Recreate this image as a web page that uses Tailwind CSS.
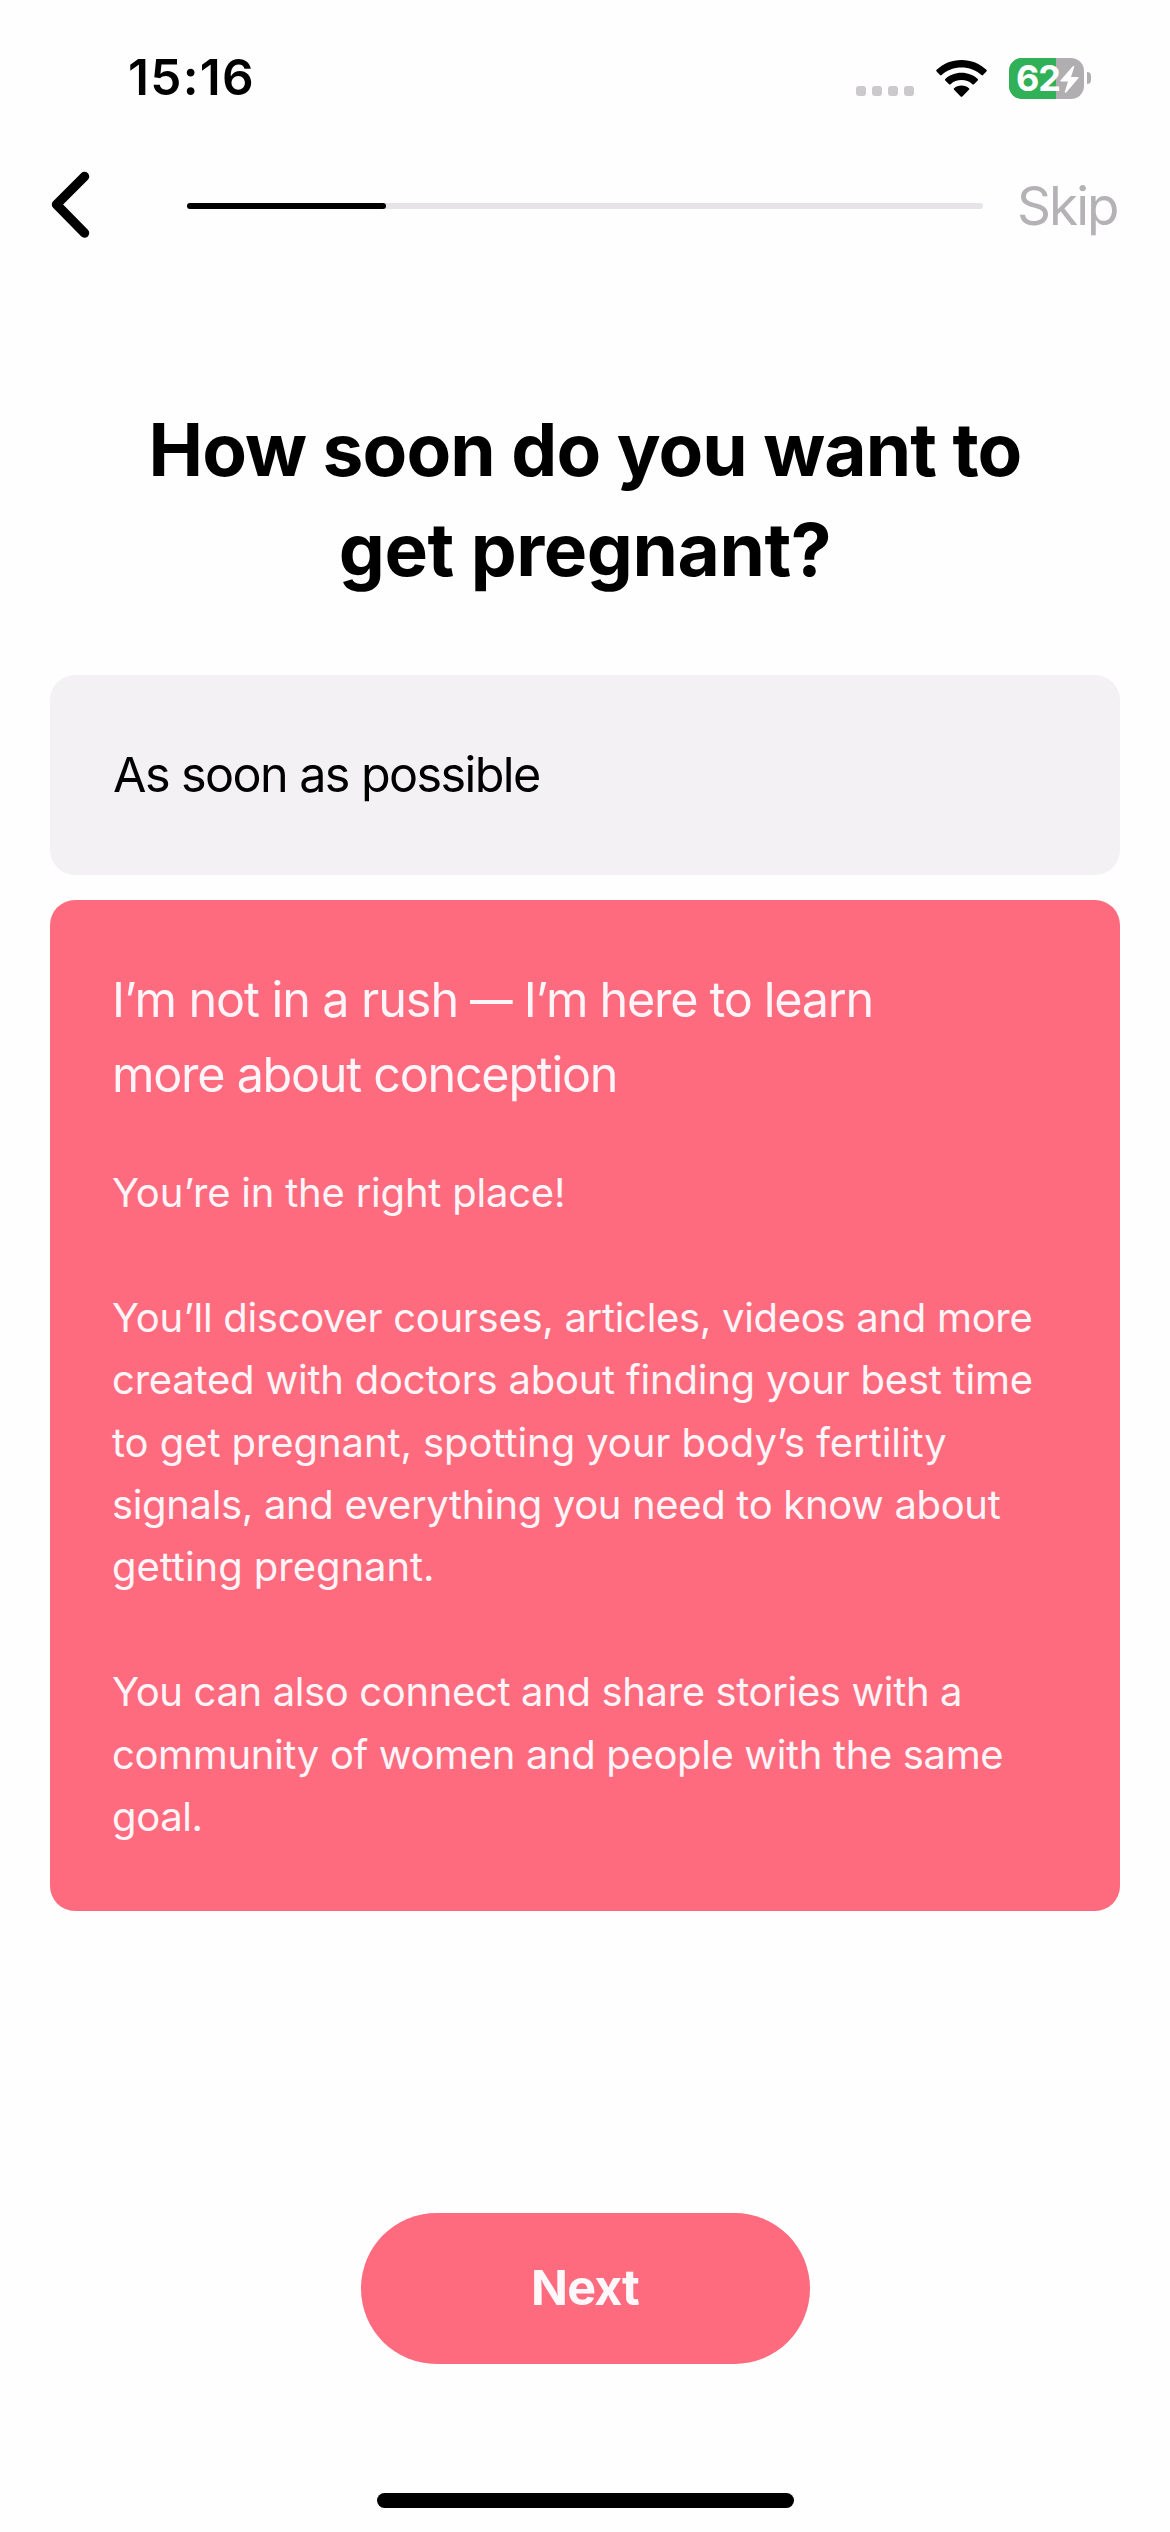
<!DOCTYPE html>
<html lang="en">
  <head>
    <meta charset="UTF-8" />
    <meta name="viewport" content="width=device-width, initial-scale=1.0" />
    <script src="https://cdn.jsdelivr.net/npm/@tailwindcss/browser@4"></script>
    <title>Onboarding</title>
  </head>
  <body class="bg-[#fefefe]">
    <div class="w-[1170px] h-[2532px] flex flex-col overflow-hidden font-[Inter,sans-serif] text-black">

      <!-- status bar -->
      <div class="h-[156px] shrink-0 flex items-center justify-between pl-32 pr-[79px]">
        <span class="text-[49.5px] leading-none font-semibold tracking-[0.026em]">15:16</span>
        <div class="flex items-center">
          <div class="flex gap-1.5 mt-[26px] mr-[22px]">
            <span class="size-2.5 rounded-[3px] bg-[#cbc9cc]"></span>
            <span class="size-2.5 rounded-[3px] bg-[#cbc9cc]"></span>
            <span class="size-2.5 rounded-[3px] bg-[#cbc9cc]"></span>
            <span class="size-2.5 rounded-[3px] bg-[#cbc9cc]"></span>
          </div>
          <svg class="w-[51px] h-[37px] mr-[22px]" viewBox="0 0 51 37">
            <path d="M25.5 0C35.2 0 44 3.700 50.400 9.800C50.900 10.300 50.900 11 50.400 11.500L47 15C46.500 15.500 45.900 15.500 45.400 15C40 10.100 33.100 7.500 25.500 7.500S11 10.100 5.600 15C5.100 15.500 4.500 15.500 4 15L0.600 11.500C0.100 11 0.100 10.300 0.600 9.800C7 3.700 15.800 0 25.500 0Z" />
            <path d="M25.500 12.700C31.800 12.700 37.500 15 41.700 18.900C42.200 19.400 42.200 20.100 41.700 20.600L38 24.200C37.500 24.700 36.900 24.700 36.400 24.200C33.400 21.600 29.700 20.100 25.500 20.100S17.600 21.600 14.600 24.200C14.100 24.700 13.500 24.700 13 24.200L9.300 20.600C8.800 20.100 8.800 19.400 9.300 18.900C13.500 15 19.200 12.700 25.500 12.700Z" />
            <path d="M25.500 25.500C28.400 25.500 31 26.500 32.900 28.200C33.400 28.600 33.400 29.300 32.900 29.800L26.400 36.400C25.900 36.900 25.100 36.900 24.600 36.400L18.100 29.800C17.600 29.300 17.600 28.600 18.100 28.200C20 26.500 22.600 25.500 25.500 25.500Z" />
          </svg>
          <div class="flex items-center gap-[3px]">
            <div class="relative w-[75px] h-[41px] rounded-[13px] bg-[#b0aeb1]">
              <div class="absolute inset-y-0 left-0 w-[47px] rounded-l-[13px] bg-[#30b157]"></div>
              <div class="absolute inset-0 flex items-center pl-[7px]">
                <span class="text-[36px] leading-none font-bold tracking-[-0.03em] text-white">62</span>
                <svg class="absolute left-[51px] top-2 w-[19px] h-[27px]" viewBox="0 0 19 27">
                  <path d="M12.800 0.300L0.600 14.200C0.100 14.800 0.400 15.500 1.100 15.500H8L4.800 25.700C4.500 26.700 5.600 27.200 6.200 26.500L18.400 12.300C18.900 11.700 18.600 11 17.900 11H11L14.200 1.100C14.500 0.200 13.500 -0.400 12.800 0.300Z" fill="#fff" />
                </svg>
              </div>
            </div>
            <div class="w-1 h-3 rounded-r-full bg-[#b0aeb1]"></div>
          </div>
        </div>
      </div>

      <!-- back, progress, skip -->
      <div class="h-[100px] shrink-0 flex items-center pl-[50px]">
        <svg class="w-10 h-[68px] -mt-0.5" viewBox="0 0 40 68" fill="none" stroke="#000" stroke-width="9.500" stroke-linecap="round" stroke-linejoin="round">
          <path d="M34.500 5.500L6.500 33.500L34.500 62" />
        </svg>
        <div class="w-[796px] h-1.5 ml-[97px] rounded-full bg-[#e6e4e7]">
          <div class="w-1/4 h-full rounded-full bg-black"></div>
        </div>
        <button class="ml-[34px] text-[53px] leading-none tracking-[-0.037em] text-[#b4b2b5]">Skip</button>
      </div>

      <h1 class="mt-36 text-center text-[73px] leading-[100px] font-bold">
        <span class="block tracking-[-0.0123em]">How soon do you want to</span>
        <span class="block tracking-[-0.006em]">get pregnant?</span>
      </h1>

      <!-- answers -->
      <div class="mt-[75px] px-[50px] flex flex-col gap-[25px]">
        <div class="h-[200px] rounded-[25px] bg-[#f3f1f4] px-[63px] flex items-center">
          <p class="text-[48.5px] tracking-[-0.0325em]">As soon as possible</p>
        </div>
        <div class="h-[1011px] rounded-[25px] bg-[#ff6b7e] pt-[62px] px-[62px] text-[#fff5f8]">
          <p class="text-[48.5px] leading-[75px] tracking-[-0.026em]"><span class="tracking-[-0.022em]">I’m not in a rush</span> <span class="inline-block w-[41px] scale-x-[.88] origin-left">—</span> I’m here to learn<br />more about conception</p>
          <div class="mt-[50px] text-[40px] leading-[62.4px] tracking-[-0.0075em] whitespace-nowrap">
            <p class="tracking-[-0.0055em]">You’re in the right place!</p>
            <p class="mt-[62.4px]">
              You’ll discover courses, articles, videos and more<br />
              <span class="tracking-[-0.0055em]">created with doctors about finding your best time</span><br />
              <span class="tracking-[-0.002em]">to get pregnant, spotting your body’s fertility</span><br />
              <span class="tracking-[-0.0085em]">signals, and everything you need to know about</span><br />
              <span class="tracking-[-0.001em]">getting pregnant.</span>
            </p>
            <p class="mt-[62.4px] tracking-[-0.009em]">
              You can also connect and share stories with a<br />
              community of women and people with the same<br />
              goal.
            </p>
          </div>
        </div>
      </div>

      <button class="mt-auto mx-auto w-[449px] h-[151px] shrink-0 rounded-full bg-[#ff6b7e] text-[48.5px] font-bold tracking-[-0.0186em] text-[#fff8fa]">Next</button>

      <!-- home indicator -->
      <div class="mt-[129px] mb-6 mx-auto w-[417px] h-[15px] shrink-0 rounded-full bg-black"></div>
    </div>
  </body>
</html>
